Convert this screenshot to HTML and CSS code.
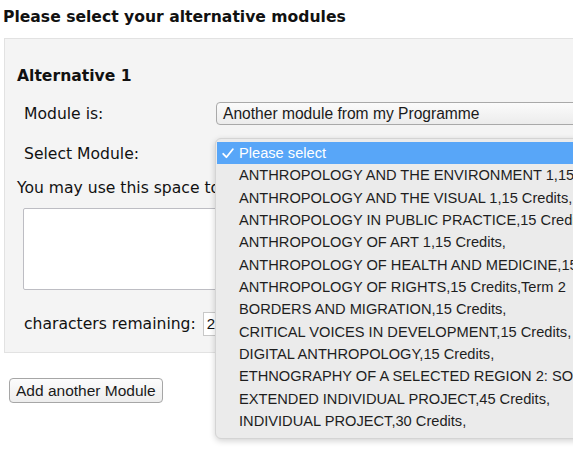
FILE: index.html
```html
<!DOCTYPE html>
<html>
<head>
<meta charset="utf-8">
<link rel="stylesheet" href="styles.css">
</head>
<body>
<h1 class="title">Please select your alternative modules</h1>
<div class="panel">
  <h2 class="alt-title">Alternative 1</h2>
  <div class="row row-first">
    <span class="lbl">Module is:</span>
    <div class="select-box">Another module from my Programme</div>
  </div>
  <div class="row row-second">
    <span class="lbl">Select Module:</span>
    <div class="select-wrap">
      <div class="menu">
        <div class="item selected">
          <svg class="check" width="12" height="11" viewBox="0 0 12 11"><path d="M1.2 5.8 L4.4 9.2 L10.8 1.2" fill="none" stroke="#fff" stroke-width="1.8" stroke-linecap="round" stroke-linejoin="round"/></svg>
          Please select
        </div>
        <div class="item">ANTHROPOLOGY AND THE ENVIRONMENT 1,15 Credits,</div>
        <div class="item">ANTHROPOLOGY AND THE VISUAL 1,15 Credits,</div>
        <div class="item">ANTHROPOLOGY IN PUBLIC PRACTICE,15 Credits,</div>
        <div class="item">ANTHROPOLOGY OF ART 1,15 Credits,</div>
        <div class="item">ANTHROPOLOGY OF HEALTH AND MEDICINE,15 Credits,</div>
        <div class="item">ANTHROPOLOGY OF RIGHTS,15 Credits,Term 2</div>
        <div class="item">BORDERS AND MIGRATION,15 Credits,</div>
        <div class="item">CRITICAL VOICES IN DEVELOPMENT,15 Credits,</div>
        <div class="item">DIGITAL ANTHROPOLOGY,15 Credits,</div>
        <div class="item">ETHNOGRAPHY OF A SELECTED REGION 2: SOUTH ASIA,15 Credits,</div>
        <div class="item">EXTENDED INDIVIDUAL PROJECT,45 Credits,</div>
        <div class="item">INDIVIDUAL PROJECT,30 Credits,</div>
      </div>
    </div>
  </div>
  <p class="hint">You may use this space to tell us why you chose this module</p>
  <div class="textarea"></div>
  <div class="row row-count">
    <span class="count-lbl">characters remaining:</span>
    <div class="count">250</div>
  </div>
</div>
<button class="add-btn">Add another Module</button>
</body>
</html>
```

FILE: styles.css
```css
html, body {
  margin: 0;
  padding: 0;
  background: #ffffff;
  overflow: hidden;
}
body {
  width: 573px;
  height: 450px;
  font-family: "DejaVu Sans", Verdana, sans-serif;
  color: #111;
}
.title {
  margin: 8px 0 0 3px;
  font-size: 15.6px;
  line-height: 19px;
  font-weight: bold;
  white-space: nowrap;
}
.panel {
  margin: 11px 0 0 4px;
  width: 640px;
  background: #f4f4f4;
  border: 1px solid #e2e2e2;
  padding: 0 0 16px 12px;
  box-sizing: border-box;
}
.alt-title {
  margin: 28px 0 0 0;
  font-size: 15.6px;
  line-height: 18px;
  font-weight: bold;
}
.row {
  display: flex;
  align-items: center;
  font-size: 15.6px;
}
.row-first {
  margin-top: 17px;
}
.row-second {
  margin-top: 17px;
  height: 23px;
}
.lbl {
  width: 192px;
  margin-left: 7px;
  flex: none;
  white-space: nowrap;
}
.select-box {
  width: 420px;
  height: 23px;
  box-sizing: border-box;
  border: 1px solid #a9a9a9;
  border-radius: 4px;
  background: linear-gradient(#fbfbfb, #ececec);
  font-family: "Liberation Sans", Arial, sans-serif;
  font-size: 15.6px;
  line-height: 22px;
  padding-left: 6px;
  color: #1a1a1a;
  white-space: nowrap;
}
.select-wrap {
  position: relative;
  width: 420px;
  height: 23px;
}
.menu {
  position: absolute;
  top: -4px;
  left: -1px;
  width: 440px;
  padding: 3px 0 6px 0;
  background: #ebebeb;
  border: 1px solid #d4d4d4;
  border-radius: 6px;
  box-shadow: 0 2px 6px rgba(0,0,0,0.18);
  font-family: "Liberation Sans", Arial, sans-serif;
  font-size: 14.65px;
  color: #1e1e1e;
  z-index: 10;
}
.item {
  position: relative;
  height: 22.35px;
  line-height: 22.35px;
  padding-left: 23px;
  white-space: nowrap;
}
.item.selected {
  background: #58a6f8;
  color: #ffffff;
  margin-left: 1px;
  padding-left: 22px;
}
.check {
  position: absolute;
  left: 5px;
  top: 6px;
}
.hint {
  margin: 14px 0 0 0;
  font-size: 15.6px;
  line-height: 18px;
  white-space: nowrap;
}
.textarea {
  margin: 11px 0 0 6px;
  width: 400px;
  height: 82px;
  box-sizing: border-box;
  background: #ffffff;
  border: 1px solid #bdbdc3;
  border-radius: 2px;
}
.row-count {
  margin-top: 22px;
}
.count-lbl {
  margin-left: 7px;
  white-space: nowrap;
}
.count {
  margin-left: 7px;
  width: 60px;
  height: 24px;
  box-sizing: border-box;
  background: #fff;
  border: 1px solid #c8c8c8;
  font-family: "Liberation Sans", Arial, sans-serif;
  font-size: 15px;
  line-height: 22px;
  padding-left: 3px;
}
.add-btn {
  display: block;
  margin: 25px 0 0 9px;
  height: 25px;
  padding: 0 6px;
  font-family: "Liberation Sans", Arial, sans-serif;
  font-size: 15.5px;
  color: #1a1a1a;
  background: linear-gradient(#fcfcfc, #ededed);
  border: 1px solid #a6a6a6;
  border-radius: 4px;
}
```
